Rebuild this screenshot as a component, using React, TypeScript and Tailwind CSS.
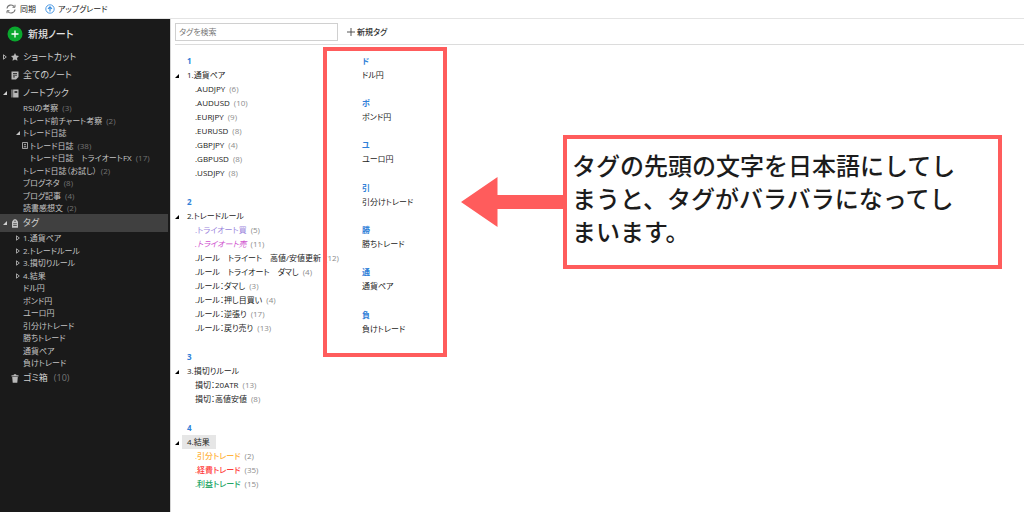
import type { ReactNode } from "react";
import clsx from "clsx";

type Item = {
  label: string;
  count?: number;
  depth?: number;
  marker?: "open" | "closed" | "box";
  className?: string;
};

type Section = { index: string; title: string; selected?: boolean; tags: Item[] };

const notebooks: Item[] = [
  { label: "RSIの考察", count: 3 },
  { label: "トレード前チャート考察", count: 2 },
  { label: "トレード日誌", marker: "open" },
  { label: "トレード日誌", count: 38, depth: 1, marker: "box" },
  { label: "トレード日誌　トライオートFX", count: 17, depth: 1 },
  { label: "トレード日誌（お試し）", count: 2 },
  { label: "ブログネタ", count: 8 },
  { label: "ブログ記事", count: 4 },
  { label: "読書感想文", count: 2 },
];

const sidebarTags: Item[] = [
  { label: "1.通貨ペア", marker: "closed" },
  { label: "2.トレードルール", marker: "closed" },
  { label: "3.損切りルール", marker: "closed" },
  { label: "4.結果", marker: "closed" },
  { label: "ドル円" },
  { label: "ポンド円" },
  { label: "ユーロ円" },
  { label: "引分けトレード" },
  { label: "勝ちトレード" },
  { label: "通貨ペア" },
  { label: "負けトレード" },
];

const sections: Section[] = [
  {
    index: "1",
    title: "1.通貨ペア",
    tags: [
      { label: ".AUDJPY", count: 6 },
      { label: ".AUDUSD", count: 10 },
      { label: ".EURJPY", count: 9 },
      { label: ".EURUSD", count: 8 },
      { label: ".GBPJPY", count: 4 },
      { label: ".GBPUSD", count: 8 },
      { label: ".USDJPY", count: 8 },
    ],
  },
  {
    index: "2",
    title: "2.トレードルール",
    tags: [
      { label: ".トライオート買", count: 5, className: "text-[#9b85dc]" },
      { label: ".トライオート売", count: 11, className: "text-[#cf52cf] italic" },
      { label: ".ルール　トライート　高値/安値更新", count: 12 },
      { label: ".ルール　トライオート　ダマし", count: 4 },
      { label: ".ルール：ダマし", count: 3 },
      { label: ".ルール：押し目買い", count: 4 },
      { label: ".ルール：逆張り", count: 17 },
      { label: ".ルール：戻り売り", count: 13 },
    ],
  },
  {
    index: "3",
    title: "3.損切りルール",
    tags: [
      { label: "損切：20ATR", count: 13 },
      { label: "損切：高値安値", count: 8 },
    ],
  },
  {
    index: "4",
    title: "4.結果",
    selected: true,
    tags: [
      { label: ".引分トレード", count: 2, className: "text-[#ffb340] font-medium" },
      { label: ".経費トレード", count: 35, className: "text-[#ff3b3b] font-medium" },
      { label: ".利益トレード", count: 15, className: "text-[#22a565] font-medium" },
    ],
  },
];

const looseTags = [
  ["ド", "ドル円"],
  ["ポ", "ポンド円"],
  ["ユ", "ユーロ円"],
  ["引", "引分けトレード"],
  ["勝", "勝ちトレード"],
  ["通", "通貨ペア"],
  ["負", "負けトレード"],
];

function OpenMark() {
  return (
    <svg viewBox="0 0 4 4" className="size-1 fill-current" aria-hidden="true">
      <path d="M4 0v4H0z" />
    </svg>
  );
}

function ClosedMark() {
  return (
    <svg viewBox="0 0 4 6" className="h-1.5 w-1 fill-none stroke-current" aria-hidden="true">
      <path d="M.5.8v4.4L3.3 3z" strokeWidth=".8" />
    </svg>
  );
}

function BoxMark() {
  return (
    <svg viewBox="0 0 6 7" className="h-[7px] w-1.5 fill-none stroke-current" aria-hidden="true">
      <path d="M.5.5h5v6h-5z" strokeWidth=".8" />
      <circle cx="3" cy="2.6" r=".8" fill="currentColor" stroke="none" />
      <path d="M1.5 5.2c0-1.4 3-1.4 3 0z" fill="currentColor" stroke="none" />
    </svg>
  );
}

function SidebarRow({
  icon,
  label,
  count,
  marker,
  active,
}: {
  icon: ReactNode;
  label: string;
  count?: number;
  marker?: "open" | "closed";
  active?: boolean;
}) {
  return (
    <button
      type="button"
      className={clsx(
        "flex h-[18px] w-full items-center text-left text-[9px] leading-[18px] text-[#d0d0d0]",
        active && "bg-[#404040]",
      )}
    >
      <span className="flex w-[10px] shrink-0 justify-center">
        {marker === "open" && <OpenMark />}
        {marker === "closed" && <ClosedMark />}
      </span>
      <span className="flex w-[13px] shrink-0 pl-px">{icon}</span>
      {label}
      {count !== undefined && <span className="ml-[6px] text-[#777]">({count})</span>}
    </button>
  );
}

function SidebarList({ items }: { items: Item[] }) {
  return (
    <ul>
      {items.map((item, i) => (
        <li key={i} className="h-3 even:h-[13px]">
          <button
            type="button"
            className={clsx(
              "flex h-full items-center text-[8px] text-[#c4c4c4]",
              item.depth ? "pl-[21px]" : "pl-[14px]",
            )}
          >
            <span className="flex w-[9px] shrink-0 items-center justify-center pr-px">
              {item.marker === "open" && <OpenMark />}
              {item.marker === "closed" && <ClosedMark />}
              {item.marker === "box" && <BoxMark />}
            </span>
            {item.label}
            {item.count !== undefined && <span className="ml-1 text-[#747474]">({item.count})</span>}
          </button>
        </li>
      ))}
    </ul>
  );
}

function Sidebar() {
  return (
    <nav className="w-[170px] shrink-0 bg-[#1a1a1a] pt-[5px]">
      <button
        type="button"
        className="mb-[4px] flex h-5 items-center gap-[5px] pl-[7px] text-[10px] font-medium text-[#e4e4e4]"
      >
        <svg viewBox="0 0 16 16" className="size-4" aria-hidden="true">
          <circle cx="8" cy="8" r="7.5" fill="#0aa82e" />
          <path d="M8 4.5v7M4.5 8h7" stroke="#fff" strokeWidth="1.3" />
        </svg>
        新規ノート
      </button>
      <SidebarRow
        marker="closed"
        label="ショートカット"
        icon={
          <svg viewBox="0 0 8 8" className="size-2 fill-[#b8b8b8]" aria-hidden="true">
            <path d="M4 0l1.2 2.5 2.800.4-2 2 .5 2.800L4 6.4 1.5 7.700 2 4.900 0 2.900l2.800-.4z" />
          </svg>
        }
      />
      <SidebarRow
        label="全てのノート"
        icon={
          <svg viewBox="0 0 8 9" className="h-[9px] w-2" aria-hidden="true">
            <path d="M.5.5h7V6L5 8.500H.5z" fill="#b8b8b8" />
            <path d="M2 2.500h4M2 4.200h4M2 5.900h2" stroke="#1a1a1a" strokeWidth=".8" />
          </svg>
        }
      />
      <SidebarRow
        marker="open"
        label="ノートブック"
        icon={
          <svg viewBox="0 0 8 9" className="h-[9px] w-2" aria-hidden="true">
            <path d="M.5.5h1v8h-1zM2.100.5h5.400v8H2.100z" fill="#b8b8b8" />
            <path d="M3.500 2.200h2.800v1.600H3.500z" fill="#1a1a1a" />
          </svg>
        }
      />
      <SidebarList items={notebooks} />
      <div className="pr-0.5">
        <SidebarRow
          active
          marker="open"
          label="タグ"
          icon={
            <svg viewBox="0 0 8 9" className="h-[9px] w-2" aria-hidden="true">
              <path d="M1 2.500L3 .3h2l2 2.200v6.200H1z" fill="#c4c4c4" />
              <circle cx="4" cy="2.200" r=".7" fill="#404040" />
              <path d="M2.200 4.700h3.600M2.200 6.500h3.600" stroke="#404040" strokeWidth=".8" />
            </svg>
          }
        />
      </div>
      <SidebarList items={sidebarTags} />
      <SidebarRow
        label="ゴミ箱"
        count={10}
        icon={
          <svg viewBox="0 0 8 9" className="h-[9px] w-2 fill-[#b8b8b8]" aria-hidden="true">
            <path d="M.5 1.300h2L3 .3h2l.5 1h2v1.200h-7zM1.200 3h5.600l-.5 5.700H1.700z" />
          </svg>
        }
      />
    </nav>
  );
}

function TagSection({ index, title, selected, tags }: Section) {
  return (
    <section className="text-[8px] leading-[14px] text-[#222]">
      <h2 className="pl-3 font-bold text-[#2f80d8]">{index}</h2>
      <button type="button" className="flex h-[14px] items-center">
        <span className="w-[7px] pt-0.5 text-black">
          <OpenMark />
        </span>
        <span className={clsx("pr-[6px] pl-[5px]", selected && "bg-[#e6e6e6]")}>{title}</span>
      </button>
      <ul className="pl-5">
        {tags.map((tag) => (
          <li key={tag.label} className="flex h-[14px] items-center gap-1 whitespace-nowrap">
            <button type="button" className={tag.className}>
              {tag.label}
            </button>
            <span className="text-[#8c8c8c]">({tag.count})</span>
          </li>
        ))}
      </ul>
    </section>
  );
}

export default function App() {
  return (
    <div className="flex min-h-screen flex-col bg-white font-['Open_Sans','Noto_Sans_CJK_JP',sans-serif] [font-feature-settings:'palt']">
      <header className="flex h-[19px] items-center gap-[9px] border-b border-[#e4e4e4] pl-[6px] text-[8px] text-[#222]">
        <button type="button" className="flex items-center gap-1">
          <svg viewBox="0 0 10 10" className="size-[10px] fill-none stroke-[#777]" aria-hidden="true">
            <path d="M1 4.500A4 4 0 0 1 8.300 2.800M9 5.500A4 4 0 0 1 1.700 7.200" strokeWidth="1.100" />
            <path d="M9 .8v2.500H6.500M1 9.200V6.700h2.500" strokeWidth="1" />
          </svg>
          同期
        </button>
        <button type="button" className="flex items-center gap-[3px]">
          <svg viewBox="0 0 10 10" className="size-[10px] fill-none stroke-[#3b8fe0]" aria-hidden="true">
            <circle cx="5" cy="5" r="4.200" strokeWidth=".9" />
            <path d="M5 7.500V3M3 4.800l2-2 2 2" strokeWidth="1.200" />
          </svg>
          アップグレード
        </button>
      </header>

      <div className="flex flex-1">
        <Sidebar />
        <main className="relative min-w-0 flex-1 border-l border-[#d4d4d4] pl-1">
          <div className="flex h-[26px] items-center gap-[9px] border-b border-[#dcdcdc] text-[8px]">
            <input
              type="text"
              aria-label="タグを検索"
              placeholder="タグを検索"
              className="h-[18px] w-[163px] border border-[#d0d0d0] px-[3px] text-[8px] placeholder:text-[#777]"
            />
            <button type="button" className="flex items-center gap-0.5 font-medium text-[#333]">
              <svg viewBox="0 0 8 8" className="size-2 stroke-[#444]" aria-hidden="true">
                <path d="M4 0v8M0 4h8" strokeWidth=".9" />
              </svg>
              新規タグ
            </button>
          </div>

          <div className="flex pt-[9px]">
            <div className="flex w-[187px] shrink-0 flex-col gap-[15px]">
              {sections.map((section) => (
                <TagSection key={section.index} {...section} />
              ))}
            </div>
            <ul className="text-[8px] leading-[14px] text-[#222]">
              {looseTags.map(([head, name]) => (
                <li key={head} className="pb-[14px] nth-[3n]:pb-[15px]">
                  <h2 className="font-bold text-[#2f80d8]">{head}</h2>
                  <button type="button" className="block">
                    {name}
                  </button>
                </li>
              ))}
            </ul>
          </div>

          {/* annotations drawn over the tag list */}
          <div className="absolute top-7 left-[152px] h-[310px] w-[124px] border-4 border-[#ff5c5c]" />
          <div className="absolute top-[116px] left-[290px] flex items-center">
            <svg viewBox="0 0 102 50" className="h-[50px] w-[102px] fill-[#ff5c5c]" aria-hidden="true">
              <path d="M0 25L36.500 0v18H102v14H36.500v18z" />
            </svg>
            <p className="h-[134px] w-[439px] border-4 border-[#ff5c5c] bg-white px-[5px] pt-[9px] font-['Noto_Sans_CJK_JP',sans-serif] text-[24px] leading-[33px] font-medium text-[#1c1c1c] [font-feature-settings:normal]">
              タグの先頭の文字を日本語にしてし
              <br />
              まうと、タグがバラバラになってし
              <br />
              まいます。
            </p>
          </div>
        </main>
      </div>
    </div>
  );
}
